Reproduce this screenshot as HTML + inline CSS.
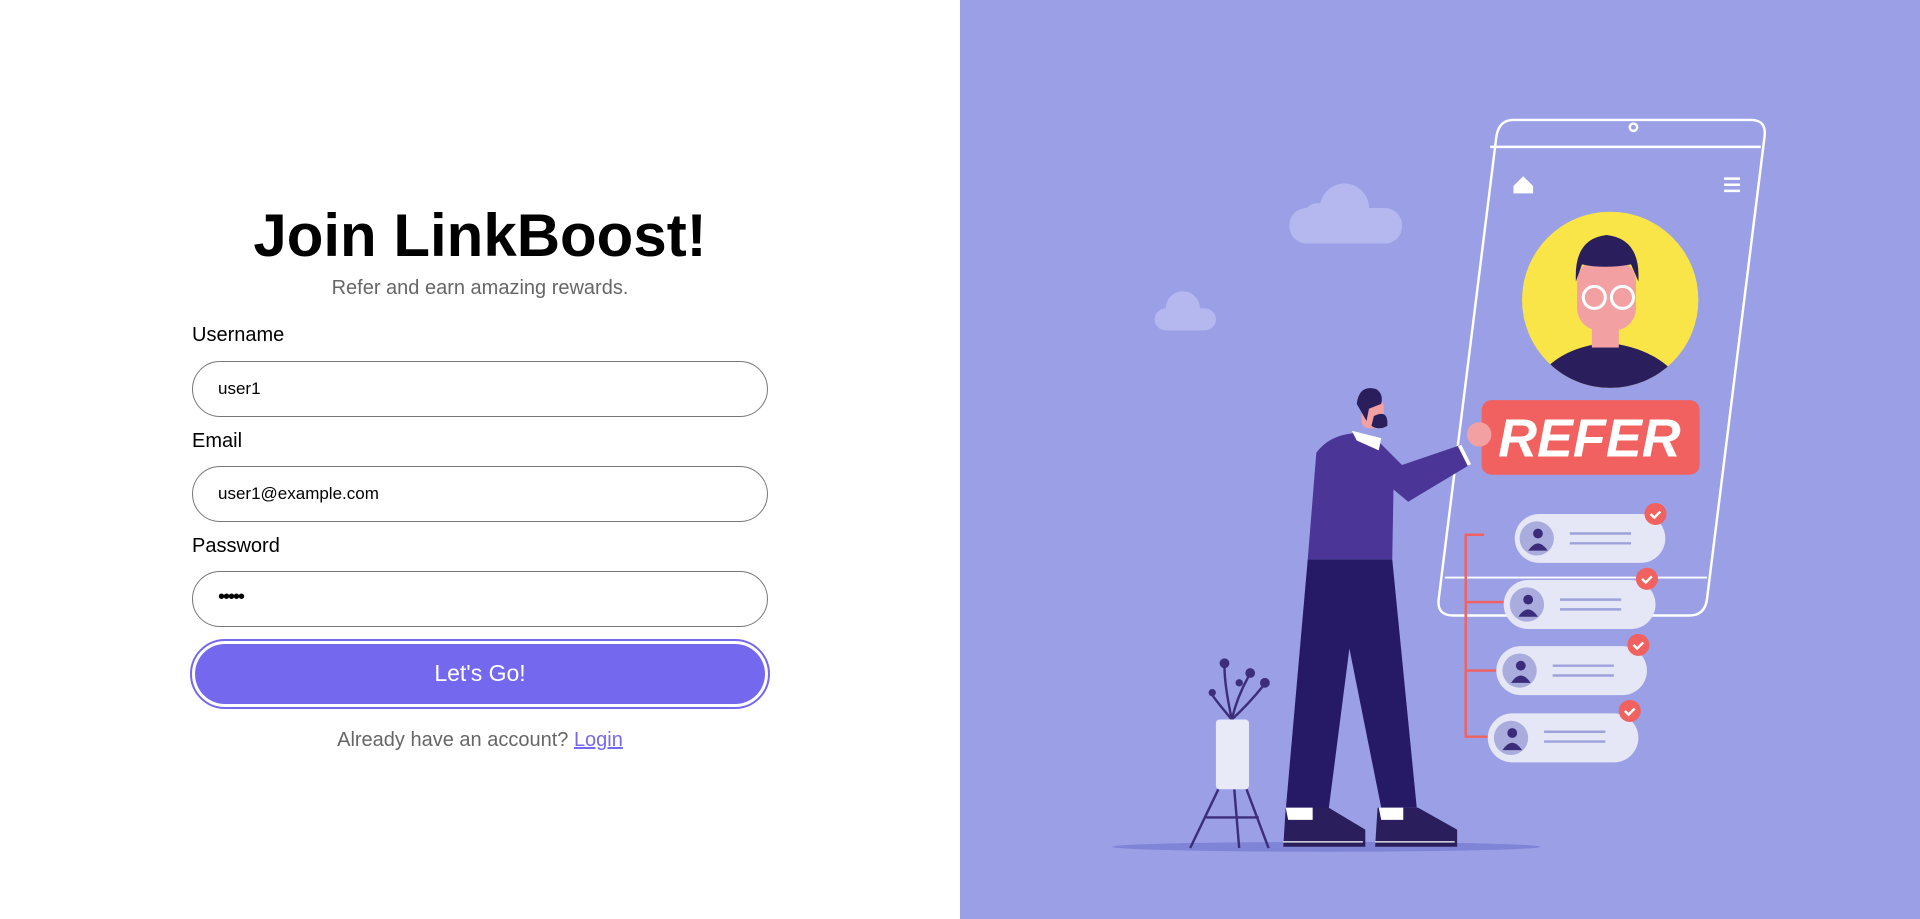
<!DOCTYPE html>
<html><head><meta charset="utf-8"><style>
*{box-sizing:border-box;margin:0;padding:0}
html,body{width:1920px;height:919px;overflow:hidden;background:#fff;font-family:"Liberation Sans",Arial,sans-serif}
.left{position:absolute;left:0;top:0;width:960px;height:919px}
h1{position:absolute;left:0;width:960px;top:201px;text-align:center;font-size:60px;font-weight:bold;color:#000}
.sub{position:absolute;left:0;width:960px;top:277px;text-align:center;font-size:20px;color:#666}
.lbl{position:absolute;left:192px;font-size:20px;color:#000}
.inp{position:absolute;left:192px;width:576px;height:56px;border:1px solid #777;border-radius:28px;font-size:17px;color:#000;padding-left:25px;line-height:54px}
.btn{position:absolute;left:190px;top:639px;width:580px;height:70px;border:2px solid #7468ee;border-radius:35px;padding:3px}
.btn div{width:100%;height:100%;background:#7468ee;border-radius:32px;color:#fff;font-size:23px;text-align:center;line-height:58px}
.foot{position:absolute;left:0;width:960px;top:729px;text-align:center;font-size:20px;color:#666}
.foot a{color:#7468ee;text-decoration:underline}
svg{position:absolute;left:960px;top:0}
</style></head><body>
<div class="left">
<h1>Join LinkBoost!</h1>
<div class="sub">Refer and earn amazing rewards.</div>
<div class="lbl" style="top:324px">Username</div>
<div class="inp" style="top:361px">user1</div>
<div class="lbl" style="top:430px">Email</div>
<div class="inp" style="top:466px">user1@example.com</div>
<div class="lbl" style="top:535px">Password</div>
<div class="inp" style="top:571px;font-size:20px;letter-spacing:-2px;line-height:50px">•••••</div>
<div class="btn"><div>Let's Go!</div></div>
<div class="foot">Already have an account? <a>Login</a></div>
</div>
<svg width="960" height="919" viewBox="784 0 784 751" preserveAspectRatio="none">
<rect x="784" y="0" width="784" height="751" fill="#9ba0e6"/>
<g fill="#b4b8ef">
<rect x="1053" y="170" width="92" height="29" rx="14"/><circle cx="1098" cy="170" r="20"/><circle cx="1076" cy="178" r="12"/>
<rect x="943" y="252" width="50" height="18" rx="9"/><circle cx="966" cy="252" r="14"/>
</g>
<ellipse cx="1083" cy="692" rx="175" ry="4" fill="#7f84d6"/>
<path d="M1236 98 H1430 Q1443 98 1441 112 L1394 490 Q1392 503 1380 503 H1187 Q1173 503 1175 489 L1222 112 Q1224 98 1236 98 Z" fill="none" stroke="#fff" stroke-width="2"/>
<path d="M1217 120 H1438" stroke="#fff" stroke-width="2"/>
<path d="M1180 472 H1394" stroke="#fff" stroke-width="1.5"/>
<circle cx="1334" cy="104" r="3" fill="none" stroke="#fff" stroke-width="2"/>
<path d="M1236 152 L1244 144 L1252 152 V158 H1236 Z" fill="#fff"/>
<path d="M1408 146 H1421 M1408 151 H1421 M1408 156 H1421" stroke="#fff" stroke-width="2"/>
<circle cx="1315" cy="245" r="72" fill="#f9e547"/>
<clipPath id="c"><circle cx="1315" cy="245" r="72"/></clipPath>
<g clip-path="url(#c)">
<path d="M1250 320 Q1265 285 1312 280 Q1360 285 1378 320 Z" fill="#2a1f5c"/>
<rect x="1300" y="262" width="22" height="22" fill="#f3a0a3"/>
<rect x="1288" y="212" width="48" height="58" rx="18" fill="#f3a0a3"/>
<path d="M1287 230 Q1285 195 1312 192 Q1340 195 1338 230 L1332 216 Q1310 220 1292 216 Z" fill="#2a1f5c"/>
<circle cx="1302" cy="243" r="9" fill="none" stroke="#fff" stroke-width="2.5"/>
<circle cx="1325" cy="243" r="9" fill="none" stroke="#fff" stroke-width="2.5"/>
</g>
<rect x="1210" y="327" width="178" height="61" rx="8" fill="#f0615f"/>
<text x="1298" y="373" text-anchor="middle" font-family="Liberation Sans" font-weight="bold" font-style="italic" font-size="44" fill="#fff">REFER</text>
<path d="M1212 437 H1197 V602 H1215 M1197 492 H1228 M1197 548 H1222" fill="none" stroke="#f0615f" stroke-width="2"/>
<g fill="#e6e7f6">
<rect x="1237" y="420" width="123" height="40" rx="20"/>
<rect x="1228" y="474" width="124" height="40" rx="20"/>
<rect x="1222" y="528" width="123" height="40" rx="20"/>
<rect x="1215" y="583" width="123" height="40" rx="20"/>
</g>
<g fill="#a9acdc"><circle cx="1255" cy="440" r="14"/><circle cx="1247" cy="494" r="14"/><circle cx="1241" cy="548" r="14"/><circle cx="1234" cy="603" r="14"/></g>
<g fill="#3a2c7a"><circle cx="1256" cy="436" r="4"/><path d="M1248 450 Q1256 438 1264 450Z"/><circle cx="1248" cy="490" r="4"/><path d="M1240 504 Q1248 492 1256 504Z"/><circle cx="1242" cy="544" r="4"/><path d="M1234 558 Q1242 546 1250 558Z"/><circle cx="1235" cy="599" r="4"/><path d="M1227 613 Q1235 601 1243 613Z"/></g>
<g stroke="#9ea2da" stroke-width="2"><path d="M1282 436 H1332 M1282 444 H1332 M1274 490 H1324 M1274 498 H1324 M1268 544 H1318 M1268 552 H1318 M1261 598 H1311 M1261 606 H1311"/></g>
<g fill="#f0615f"><circle cx="1352" cy="420" r="9"/><circle cx="1345" cy="473" r="9"/><circle cx="1338" cy="527" r="9"/><circle cx="1331" cy="581" r="9"/></g>
<g stroke="#fff" stroke-width="2" fill="none"><path d="M1348 420 l3 3 l5 -5 M1341 473 l3 3 l5 -5 M1334 527 l3 3 l5 -5 M1327 581 l3 3 l5 -5"/></g>
<path d="M1068 457 H1137 L1157 660 H1128 L1102 530 L1085 662 H1050 Z" fill="#261a66"/>
<path d="M1075 370 Q1085 356 1105 354 L1125 360 L1145 380 L1192 364 L1200 380 L1150 410 L1138 400 L1137 457 H1068 Z" fill="#4b3596"/>
<path d="M1104 352 L1128 358 L1126 368 L1108 360Z" fill="#fff"/>
<circle cx="1208" cy="355" r="10" fill="#f3a0a3"/>
<path d="M1192 364 L1200 380" stroke="#fff" stroke-width="3"/>
<rect x="1112" y="326" width="18" height="24" rx="6" fill="#f3a0a3"/>
<path d="M1108 330 Q1110 314 1124 318 Q1130 322 1128 330 L1118 334 L1116 344 Z" fill="#2a1f5c"/>
<path d="M1122 340 Q1134 334 1133 348 Q1126 352 1120 348Z" fill="#2a1f5c"/>
<path d="M1050 660 H1085 L1115 678 V692 H1048 Z M1125 660 H1158 L1190 678 V692 H1123 Z" fill="#2a1f5c"/>
<path d="M1050 660 H1072 V670 H1052Z M1126 660 H1146 V670 H1128Z" fill="#fff"/>
<path d="M1048 688 H1113 M1123 688 H1188" stroke="#fff" stroke-width="1"/>
<g stroke="#3d2e7c" stroke-width="2" fill="none">
<path d="M995 645 L972 693 M1018 645 L1036 693 M1008 645 L1012 693 M985 668 H1028"/>
<path d="M1006 588 Q1000 560 1000 545 M1006 588 Q1010 570 1020 552 M1006 588 Q1020 575 1032 560 M1006 588 Q995 575 990 568"/>
</g>
<g fill="#3d2e7c"><circle cx="1000" cy="542" r="4"/><circle cx="1021" cy="550" r="4"/><circle cx="1033" cy="558" r="4"/><circle cx="990" cy="566" r="3"/><circle cx="1012" cy="558" r="3"/></g>
<rect x="993" y="588" width="27" height="57" rx="3" fill="#e9eaf8"/>
</svg>
</body></html>
